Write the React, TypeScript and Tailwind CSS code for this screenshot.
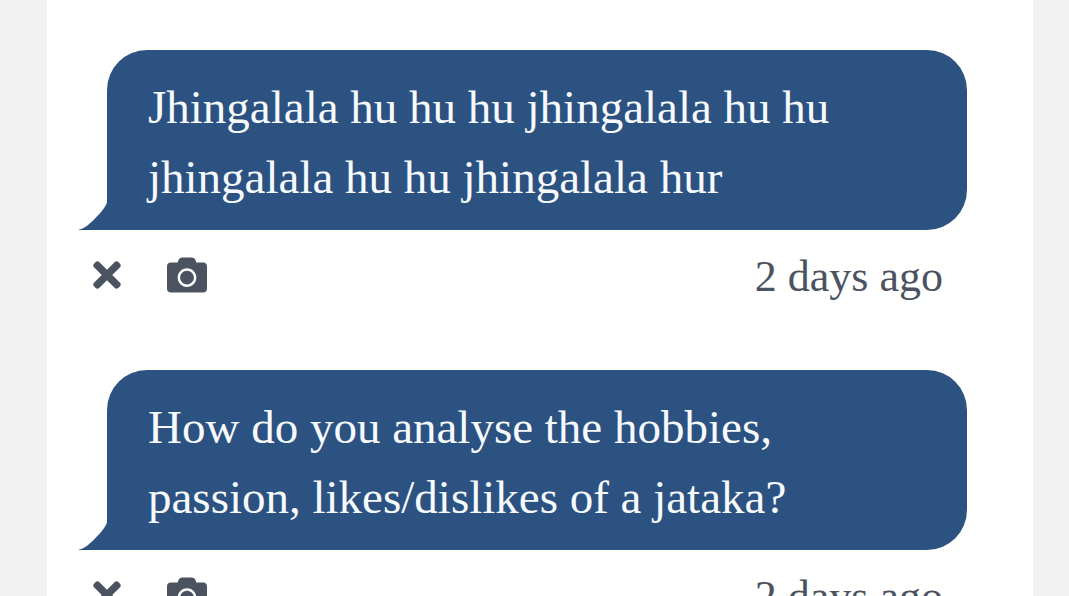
import React from 'react'
import { FaCamera, FaTimes } from 'react-icons/fa'

interface Message {
  id: number
  text: string
  time: string
}

const messages: Message[] = [
  {
    id: 1,
    text: 'Jhingalala hu hu hu jhingalala hu hu\njhingalala hu hu jhingalala hur',
    time: '2 days ago'
  },
  {
    id: 2,
    text: 'How do you analyse the hobbies,\npassion, likes/dislikes of a jataka?',
    time: '2 days ago'
  }
]

const BubbleTail: React.FC = () => (
  <svg
    className="absolute bottom-0 right-full h-7 w-7 text-[#2c5282]"
    viewBox="0 0 28 28"
    fill="currentColor"
    aria-hidden="true"
  >
    <path d="M28 0C27.5 4 21 11.5 16 16.5C11 21.500 5.500 27 0 27.500V28H28Z" />
  </svg>
)

const MessageItem: React.FC<{ message: Message }> = ({ message }) => (
  <li>
    <div className="relative ml-5 rounded-[40px] rounded-bl-none bg-[#2c5282] pb-[18px] pl-[41px] pr-10 pt-[22px]">
      <BubbleTail />
      <p className="whitespace-pre-line text-[47px] leading-[70px] text-[#f7fafc]">{message.text}</p>
    </div>
    <div className="flex h-[90px] items-center justify-between pr-6 text-[#4b5361]">
      <div className="flex gap-10 text-[40px]">
        <button type="button" aria-label="Delete">
          <FaTimes />
        </button>
        <button type="button" aria-label="Camera">
          <FaCamera />
        </button>
      </div>
      <time className="pt-1 text-[44px] leading-[70px]">{message.time}</time>
    </div>
  </li>
)

const App: React.FC = () => (
  <div className="h-screen overflow-hidden bg-[#f1f1f1] pl-[47px] pr-9 font-['Liberation_Serif',serif]">
    <main className="min-h-full bg-white pb-12 pl-10 pr-[66px] pt-[50px]">
      <ul className="flex flex-col gap-[50px]">
        {messages.map((message) => (
          <MessageItem key={message.id} message={message} />
        ))}
      </ul>
    </main>
  </div>
)

export default App
